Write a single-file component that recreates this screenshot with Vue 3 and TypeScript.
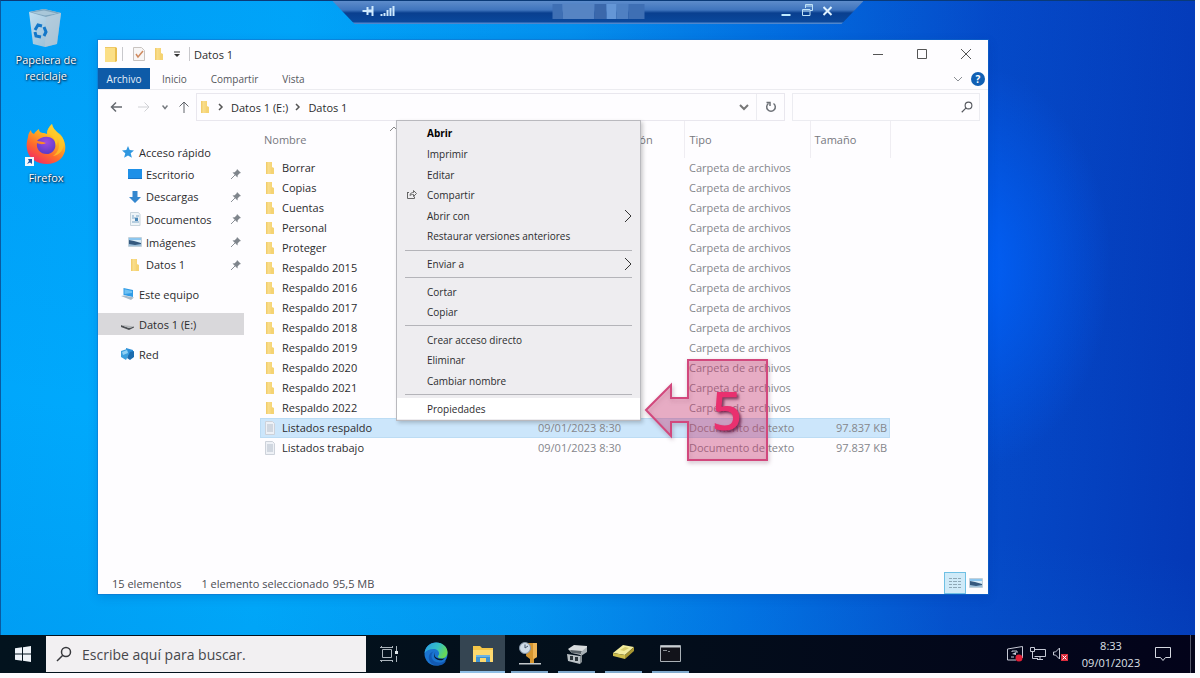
<script setup lang="ts">
import { ref } from 'vue'

interface Place { label: string; icon: string }
interface FileRow { name: string; kind: 'folder' | 'text'; date: string; type: string; size: string }
interface MenuEntry { label: string; strong?: boolean; arrow?: boolean; share?: boolean; startsGroup?: boolean }
interface TaskApp { label: string; icon: string; state: 'idle' | 'open' | 'active' }

const pinned: Place[] = [
  { label: 'Escritorio', icon: 'desktop' },
  { label: 'Descargas', icon: 'download' },
  { label: 'Documentos', icon: 'document' },
  { label: 'Imágenes', icon: 'picture' },
  { label: 'Datos 1', icon: 'folder' },
]

const roots: Place[] = [
  { label: 'Este equipo', icon: 'computer' },
  { label: 'Datos 1 (E:)', icon: 'drive' },
  { label: 'Red', icon: 'network' },
]

const folderNames = [
  'Borrar', 'Copias', 'Cuentas', 'Personal', 'Proteger',
  'Respaldo 2015', 'Respaldo 2016', 'Respaldo 2017', 'Respaldo 2018',
  'Respaldo 2019', 'Respaldo 2020', 'Respaldo 2021', 'Respaldo 2022',
]

const files: FileRow[] = [
  ...folderNames.map((name): FileRow => ({ name, kind: 'folder', date: '', type: 'Carpeta de archivos', size: '' })),
  { name: 'Listados respaldo', kind: 'text', date: '09/01/2023 8:30', type: 'Documento de texto', size: '97.837 KB' },
  { name: 'Listados trabajo', kind: 'text', date: '09/01/2023 8:30', type: 'Documento de texto', size: '97.837 KB' },
]

const menu: MenuEntry[] = [
  { label: 'Abrir', strong: true },
  { label: 'Imprimir' },
  { label: 'Editar' },
  { label: 'Compartir', share: true },
  { label: 'Abrir con', arrow: true },
  { label: 'Restaurar versiones anteriores' },
  { label: 'Enviar a', arrow: true, startsGroup: true },
  { label: 'Cortar', startsGroup: true },
  { label: 'Copiar' },
  { label: 'Crear acceso directo', startsGroup: true },
  { label: 'Eliminar' },
  { label: 'Cambiar nombre' },
  { label: 'Propiedades', startsGroup: true },
]

const apps: TaskApp[] = [
  { label: 'Vista de tareas', icon: 'taskview', state: 'idle' },
  { label: 'Microsoft Edge', icon: 'edge', state: 'idle' },
  { label: 'Explorador de archivos', icon: 'explorer', state: 'active' },
  { label: 'Copias programadas', icon: 'backup', state: 'open' },
  { label: 'Servidor', icon: 'server', state: 'open' },
  { label: 'Disco', icon: 'disk', state: 'open' },
  { label: 'Símbolo del sistema', icon: 'console', state: 'open' },
]

const selectedFile = ref('Listados respaldo')
const selectedPlace = ref('Datos 1 (E:)')
const activeEntry = ref('Propiedades')
const query = ref('')
const taskQuery = ref('')
</script>

<template>
  <div class="screen">
    <svg class="sprite" aria-hidden="true">
      <defs>
        <linearGradient id="g-fold" x1="0" x2="1" y1="0" y2="0">
          <stop offset="0" stop-color="#fbe39a" /><stop offset="1" stop-color="#f4cf68" />
        </linearGradient>
        <linearGradient id="g-bin" x1="0" x2="1" y1="0" y2="1">
          <stop offset="0" stop-color="#d3e6f2" /><stop offset="1" stop-color="#9fb9cc" />
        </linearGradient>
        <linearGradient id="g-fox" x1="0.8" x2="0.2" y1="0" y2="1">
          <stop offset="0" stop-color="#fff04a" /><stop offset="0.35" stop-color="#ffb021" />
          <stop offset="0.65" stop-color="#ff6a2c" /><stop offset="1" stop-color="#f0246b" />
        </linearGradient>
        <radialGradient id="g-orb" cx="0.5" cy="0.3" r="0.7">
          <stop offset="0" stop-color="#a04be0" /><stop offset="1" stop-color="#5a3bc8" />
        </radialGradient>
        <linearGradient id="g-edge" x1="0" x2="1" y1="0" y2="0.4">
          <stop offset="0" stop-color="#2a9be8" /><stop offset="0.6" stop-color="#35c1c4" /><stop offset="1" stop-color="#66d85a" />
        </linearGradient>
      </defs>
      <symbol id="folder" viewBox="0 0 12 14">
        <path d="M2 1h6v5l2 1v6H2z" fill="url(#g-fold)" />
        <path d="M2 1h1.500v12H2z" fill="#f2cd6c" />
        <path d="M7 7h3v6H7z" fill="#f5d373" />
      </symbol>
      <symbol id="bigfolder" viewBox="0 0 14 16">
        <path d="M1 1h10l2 1v13l-2 1H1z" fill="#fbdf86" />
        <path d="M11 1l2 1v13l-2 1z" fill="#e9bd4e" />
        <path d="M1 1h10v1H1z" fill="#eec867" />
      </symbol>
      <symbol id="text" viewBox="0 0 12 14">
        <path d="M1.500.5h7l2 2v11h-9z" fill="#eef1f6" stroke="#cdd2da" />
        <path d="M3 4h6M3 6h6M3 8h6M3 10h6" stroke="#b3bdca" />
      </symbol>
      <symbol id="star" viewBox="0 0 14 14">
        <path d="M7 1l1.700 4 4.300.4-3.300 2.800 1.200 4.500L7 10.400l-3.900 2.300 1.200-4.500L1 5.400l4.300-.4z" fill="#2f97e0" />
      </symbol>
      <symbol id="desktop" viewBox="0 0 14 14"><path d="M0 2h14v10H0z" fill="#1e90e8" /><path d="M0 11h14v1H0z" fill="#1976c8" /></symbol>
      <symbol id="download" viewBox="0 0 14 14"><path d="M4.500 1h5v6h3.500L7 13 1 7h3.500z" fill="#3487cf" /></symbol>
      <symbol id="document" viewBox="0 0 14 14">
        <path d="M2.500.5h8l1.500 2v11H2.500z" fill="#eef4f8" stroke="#c8d4dc" />
        <path d="M4 4h2M8 4h3M4 6h6M4 10h7" stroke="#7ba5c6" /><path d="M7 6h3v3H7z" fill="#4a87b8" />
      </symbol>
      <symbol id="picture" viewBox="0 0 14 14">
        <path d="M.5 2.500h13v9H.5z" fill="#d8ecf8" stroke="#c2d0da" />
        <path d="M1 3h12v2H1z" fill="#8cc6ef" /><path d="M1 5l5 1 7 2v2H1z" fill="#35597f" /><path d="M1 9l6 1 6-1v2H1z" fill="#9dbfd9" />
      </symbol>
      <symbol id="computer" viewBox="0 0 14 14">
        <path d="M2.500 1l9.500 2v7l-9.500-2z" fill="#2f9be6" /><path d="M3.500 2.300l7.500 1.600v2L3.500 7z" fill="#6ec1f3" />
        <path d="M0 9l3-.5 10 2-3 2.500z" fill="#a9bac8" />
      </symbol>
      <symbol id="drive" viewBox="0 0 14 14"><path d="M0 8l8 3 5-1.500v1L8 13 0 10z" fill="#4c4f53" /><path d="M0 8l6 .5 7 1-5 1.600z" fill="#b3b5b8" /></symbol>
      <symbol id="network" viewBox="0 0 14 14">
        <path d="M5 1l7 2v8l-7-2z" fill="#2b8fd9" /><path d="M0 4l6-2 2 5-3 6-5-3z" fill="#3b9fdd" />
        <path d="M9 5l4-1v6l-4 3-3-2z" fill="#1c6cae" /><path d="M1 5l5-2 1 3-5 2z" fill="#8fd0f4" />
      </symbol>
      <symbol id="pin" viewBox="0 0 12 12">
        <path d="M7 1l4 4-1.300.3-2 2L7.500 9.500 2.500 4.500l2.200-.2 2-2z" fill="#7f858c" /><path d="M5 7l-4 4" stroke="#8b9198" />
      </symbol>
      <symbol id="taskview" viewBox="0 0 26 26">
        <g fill="none" stroke="#aab4bb"><path d="M6.500 8.500h9v8h-9z" /><path d="M4 6.500h13M4 19.500h13M5.500 5v2M16.500 5v2M5.500 19v2M16.500 19v2M20.500 5v6M20.500 15v6" /></g>
        <path d="M19 10h3v3h-3z" fill="#dfe6ea" />
      </symbol>
      <symbol id="edge" viewBox="0 0 26 26">
        <circle cx="13" cy="13" r="11.500" fill="#1a74d0" />
        <path d="M1.600 12C2.500 5.500 7.500 1.500 13.300 1.500c6.500 0 11.200 4.500 11.200 9.700 0 4-2.800 6.300-6 6.300-2.400 0-3.700-.8-3.700-1.900 0-.9 1.300-1.300 1.300-3.200 0-2.400-2.400-4.400-5.600-4.400C6.700 8 3.300 9.500 1.600 12z" fill="url(#g-edge)" />
        <path d="M10.500 10.500c-3 2.500-2.700 7.600 1.300 10 3.200 1.800 7.300 1.200 9.800-.3.700-.4 1.200.2.800.8-2 2.600-5.200 3.900-9 3.500-5-.5-8-4.500-7.600-8.500.3-3 2.300-5 4.700-5.500z" fill="#125ab4" />
        <path d="M12.500 11c-1.700 1.500-1.500 4 .5 5.500 2.500 1.700 6 1.500 8.700.7-1 1.500-3 2.300-5 2-3-.3-5.500-2-5.700-4.500-.1-1.500.5-3 1.500-3.700z" fill="#06182c" />
      </symbol>
      <symbol id="explorer" viewBox="0 0 26 26">
        <path d="M3 5h7l2 2h11v14H3z" fill="#f5c648" /><path d="M3 9h20v12H3z" fill="#fdd96f" />
        <path d="M6 21v-7h14v7h-4v-4h-6v4z" fill="#3f93d2" /><path d="M6 14h14v2H6z" fill="#6db4e4" />
      </symbol>
      <symbol id="backup" viewBox="0 0 26 26">
        <path d="M10 2h10v14l-3 2v4h-4v-4l-4-3z" fill="#d5952f" /><path d="M16 2h4v14l-4 2z" fill="#eeb455" />
        <circle cx="8" cy="7" r="5.500" fill="#cfdce8" stroke="#8394a6" /><path d="M8 3.500V7l3-2" stroke="#44566a" fill="none" />
        <path d="M2 22h22v1.500H2z" fill="#c2c8cc" />
      </symbol>
      <symbol id="server" viewBox="0 0 26 26">
        <path d="M4 8l6-4 13 1v5l-6 4-9-2z" fill="#d8dcde" /><path d="M6 9l12 1-1 3-9-1z" fill="#596268" /><path d="M17 11l6-5v5l-6 4z" fill="#a8b0b5" />
        <path d="M3 13l13 2v8L4 20z" fill="#b9c0c4" /><path d="M6 15h3v4H6zM11 16h3v4h-3z" fill="#2d363c" /><path d="M16 15l2-2v8l-2 2z" fill="#858d92" />
      </symbol>
      <symbol id="disk" viewBox="0 0 26 26">
        <path d="M2 12L12 4l11 2-9 8z" fill="#f3eda0" /><path d="M2 12l12 2v4L2 15z" fill="#cdbd4c" /><path d="M14 14l9-8v4l-9 8z" fill="#a89632" />
        <path d="M9 9l5-3 4 1-5 3z" fill="#d7cd6d" />
      </symbol>
      <symbol id="console" viewBox="0 0 26 26">
        <path d="M2.500 4.500h20v16h-20z" fill="#12131a" stroke="#a9b0b6" /><path d="M3 5h19v1.500H3z" fill="#c9ced2" /><path d="M5 9.500h4M10 10.500h2" stroke="#888d92" />
      </symbol>
      <symbol id="lens" viewBox="0 0 16 16">
        <circle cx="10" cy="6" r="4.500" fill="none" stroke="currentColor" stroke-width="1.500" /><path d="M6.800 9.200L1 15" stroke="currentColor" stroke-width="1.500" />
      </symbol>
    </svg>

    <main class="desktop">
      <nav class="shortcuts" aria-label="Escritorio">
        <button class="shortcut">
          <svg width="42" height="42" viewBox="0 0 42 42">
            <path d="M4 5L19 2l17 4-4 31-12 3L8 37z" fill="url(#g-bin)" opacity=".92" />
            <path d="M4 5l15-3 17 4-15 4z" fill="#7fa6bf" /><path d="M7 5.500l12-2 13 3-12 2z" fill="#a9c7d9" />
            <path d="M21 10l15-4-4 31-12 3z" fill="#b6cad8" opacity=".6" />
            <g fill="none" stroke="#1377c9" stroke-width="3"><path d="M10 23l3-5 4 1" /><path d="M19 20l2 5-2 4" /><path d="M16 30l-5-1-1-4" /></g>
          </svg>
          <span>Papelera de reciclaje</span>
        </button>
        <button class="shortcut">
          <svg width="42" height="44" viewBox="0 0 42 44">
            <path d="M3 14c0-3 2-6 3-7 0 2 1 3 3 4 1-2 3-4 5-5 0 3 2 4 5 4l3 1c0-4 2-7 5-10 1 5 4 7 7 10 6 5 7 12 6 17-2 8-9 13-18 13C12 41 3 35 2 26c-1-4 0-8 1-12z" fill="url(#g-fox)" />
            <path d="M22 10c6 2 9 7 8 13 3-2 3-6 2-9 4 8 2 15-4 19 7-1 11-7 11-13 0-4-2-7-4-9-4-3-7-5-8-10-3 3-5 5-5 9z" fill="#ffc928" opacity=".7" />
            <path d="M12 18c3-4 11-6 16-2 5 5 2 15-6 15-7 0-11-5-10-11 2 1 6 2 9 0-3-1-6-2-9-2z" fill="url(#g-orb)" />
            <path d="M0 34h9v9H0z" fill="#f4f8fc" /><path d="M2 41l2-3-1-2h4v5l-2-1.500z" fill="#1c5aa8" />
          </svg>
          <span>Firefox</span>
        </button>
      </nav>

      <header class="session">
        <svg width="34" height="14" viewBox="0 0 34 14" aria-hidden="true">
          <path d="M1 7h5M6 3v8M11 2v10" stroke="#cfeaff" stroke-width="2" /><path d="M6 5.500h5v3H6z" fill="#cfeaff" />
          <path d="M20 12v-2M23 12V9M26 12V6M29 12V4M32 12V2" stroke="#cfeaff" stroke-width="2" />
        </svg>
        <div class="mosaic" aria-hidden="true"><i /><i /><i /><i /><i /><i /></div>
        <div class="session-buttons">
          <button aria-label="Minimizar sesión"><svg width="12" height="14" viewBox="0 0 12 14"><path d="M1 12h9" stroke="#bfeaff" stroke-width="2" /></svg></button>
          <button aria-label="Restaurar sesión"><svg width="12" height="14" viewBox="0 0 12 14"><path d="M4 5V1.500h7v6H8.500M4 3h7M1 6.500h7.500v6H1zM1 8h7" stroke="#bfe2f8" fill="none" /></svg></button>
          <button aria-label="Cerrar sesión"><svg width="12" height="14" viewBox="0 0 12 14"><path d="M1 4l8 8M9 4l-8 8" stroke="#dff2ff" stroke-width="2" /></svg></button>
        </div>
      </header>

      <section class="window" aria-label="Datos 1">
        <header class="titlebar">
          <svg width="14" height="16"><use href="#bigfolder" /></svg>
          <i class="rule first" />
          <svg width="12" height="14" viewBox="0 0 12 14"><path d="M.5.5h8l3 3v10H.5z" fill="#f8f6f6" stroke="#c9c3c0" /><path d="M3 7l2 3 5-6" stroke="#cf8a60" stroke-width="1.500" fill="none" /></svg>
          <svg width="12" height="14"><use href="#folder" /></svg>
          <svg width="8" height="8" viewBox="0 0 8 8"><path d="M1 2h6" stroke="#333" /><path d="M1 4h6L4 7z" fill="#333" /></svg>
          <i class="rule" />
          <h1>Datos 1</h1>
          <div class="caption">
            <button aria-label="Minimizar"><svg width="12" height="12"><path d="M1 6.500h10" stroke="#555" /></svg></button>
            <button aria-label="Maximizar"><svg width="12" height="12"><path d="M1.500 1.500h9v9h-9z" stroke="#555" fill="none" /></svg></button>
            <button aria-label="Cerrar"><svg width="12" height="12"><path d="M1 1l10 10M11 1L1 11" stroke="#555" /></svg></button>
          </div>
        </header>

        <nav class="ribbon" aria-label="Cinta">
          <button class="file-tab">Archivo</button>
          <button>Inicio</button>
          <button>Compartir</button>
          <button>Vista</button>
          <div class="ribbon-end">
            <button aria-label="Expandir la cinta"><svg width="10" height="6"><path d="M1 1l4 4 4-4" stroke="#8b8f94" fill="none" /></svg></button>
            <button class="help" aria-label="Ayuda">?</button>
          </div>
        </nav>

        <div class="navbar">
          <div class="history">
            <button aria-label="Atrás"><svg width="12" height="12"><path d="M12 6H1M6 1.500L1.500 6 6 10.500" stroke="#666a70" stroke-width="1.500" fill="none" /></svg></button>
            <button aria-label="Adelante"><svg width="12" height="12"><path d="M0 6h11M6.500 1.500L11 6l-4.500 4.500" stroke="#d0d1d5" fill="none" /></svg></button>
            <button aria-label="Ubicaciones recientes"><svg width="6" height="12"><path d="M.5 4.500l2.500 3 2.500-3" stroke="#777b80" stroke-width="1.500" fill="none" /></svg></button>
            <button aria-label="Arriba"><svg width="12" height="12"><path d="M6 12V1M1.500 5.500L6 1l4.500 4.500" stroke="#60646a" fill="none" /></svg></button>
          </div>
          <div class="address">
            <svg width="12" height="14"><use href="#folder" /></svg>
            <svg class="sep" width="6" height="8"><path d="M1 1l3 3-3 3" stroke="#555" stroke-width="1.500" fill="none" /></svg>
            <button>Datos 1 (E:)</button>
            <svg class="sep" width="6" height="8"><path d="M1 1l3 3-3 3" stroke="#555" stroke-width="1.500" fill="none" /></svg>
            <button>Datos 1</button>
            <button class="drop" aria-label="Mostrar ubicaciones"><svg width="10" height="8"><path d="M1 2l4 4 4-4" stroke="#777" stroke-width="2" fill="none" /></svg></button>
            <button class="reload" aria-label="Actualizar"><svg width="12" height="12"><path d="M8.500 2.500a4.300 4.300 0 1 1-5 0M1.500 1.500h3.500v3.500" stroke="#6c7076" stroke-width="1.500" fill="none" /></svg></button>
          </div>
          <label class="find">
            <input v-model="query" type="search" aria-label="Buscar en Datos 1" />
            <svg width="12" height="12"><use href="#lens" /></svg>
          </label>
        </div>

        <div class="body">
          <nav class="places" aria-label="Panel de navegación">
            <button class="place"><svg width="14" height="14"><use href="#star" /></svg>Acceso rápido</button>
            <div class="pinned">
              <button v-for="p in pinned" :key="p.label" class="place child">
                <svg width="14" height="14"><use :href="'#' + p.icon" /></svg>{{ p.label }}
                <svg class="pin" width="12" height="12"><use href="#pin" /></svg>
              </button>
            </div>
            <div class="roots">
              <button
                v-for="p in roots" :key="p.label" class="place"
                :class="{ current: p.label === selectedPlace }" @click="selectedPlace = p.label"
              >
                <svg width="14" height="14"><use :href="'#' + p.icon" /></svg>{{ p.label }}
              </button>
            </div>
          </nav>

          <div class="listing">
            <table>
              <colgroup><col class="c-name" /><col class="c-date" /><col class="c-type" /><col class="c-size" /></colgroup>
              <thead>
                <tr>
                  <th scope="col">Nombre<svg class="sort" width="8" height="5"><path d="M0 5l4-4 4 4" stroke="#888" fill="none" /></svg></th>
                  <th scope="col">Fecha de modificación</th>
                  <th scope="col">Tipo</th>
                  <th scope="col">Tamaño</th>
                </tr>
              </thead>
              <tbody>
                <tr v-for="f in files" :key="f.name" :class="{ chosen: f.name === selectedFile }" @click="selectedFile = f.name">
                  <td class="name"><div><svg width="12" height="14"><use :href="'#' + f.kind" /></svg>{{ f.name }}</div></td>
                  <td>{{ f.date }}</td>
                  <td>{{ f.type }}</td>
                  <td class="size">{{ f.size }}</td>
                </tr>
              </tbody>
            </table>
          </div>
        </div>

        <footer class="status">
          <span>15 elementos</span>
          <span>1 elemento seleccionado</span>
          <span class="weight">95,5 MB</span>
          <div class="views">
            <button class="on" aria-label="Detalles"><svg width="14" height="14"><path d="M1 2.500h3M1 5.500h3M1 8.500h3M1 11.500h3M5 2.500h4M5 5.500h4M5 8.500h4M5 11.500h4M10 2.500h3M10 5.500h3M10 8.500h3M10 11.500h3" stroke="#8fa8b6" /></svg></button>
            <button aria-label="Iconos grandes"><svg width="14" height="14"><use href="#picture" /></svg></button>
          </div>
        </footer>

        <div class="menu" role="menu">
          <template v-for="m in menu" :key="m.label">
            <hr v-if="m.startsGroup" />
            <button role="menuitem" :class="{ strong: m.strong, hot: m.label === activeEntry }" @mouseenter="activeEntry = m.label">
              <span class="lead"><svg v-if="m.share" width="12" height="12"><path d="M1.500 3v6.500h7V7.500M1 3.500h2M4 6.500C4 4 6 3.500 7.500 3.500V1.500l3 3-3 3v-2C6 5.500 5 5.500 4 6.500z" stroke="#666" fill="none" /></svg></span>
              {{ m.label }}
              <svg v-if="m.arrow" class="more" width="8" height="14"><path d="M1 1l6 6-6 6" stroke="#333" fill="none" /></svg>
            </button>
          </template>
        </div>

        <svg class="callout" width="130" height="110" viewBox="0 0 130 110" role="img" aria-label="5">
          <path d="M3 54L28 29v13h17V4h79v100H45V66H28v14z" fill="#e0427f" fill-opacity=".34" stroke="#d2487d" stroke-width="2" />
          <text x="84" y="74" text-anchor="middle">5</text>
        </svg>
      </section>
    </main>

    <footer class="taskbar">
      <button class="start" aria-label="Inicio">
        <svg width="16" height="16"><path d="M0 2.300l7-1v6.200H0zM8 1.200L16 0v7.500H8zM0 8.500h7v6.200l-7-1zM8 8.500h8V16l-8-1.200z" fill="#eef3f8" /></svg>
      </button>
      <label class="search">
        <svg width="16" height="16"><use href="#lens" /></svg>
        <input v-model="taskQuery" type="text" placeholder="Escribe aquí para buscar." aria-label="Escribe aquí para buscar" />
      </label>
      <div class="apps">
        <button v-for="a in apps" :key="a.label" :class="a.state" :aria-label="a.label">
          <svg width="26" height="26"><use :href="'#' + a.icon" /></svg>
        </button>
      </div>
      <div class="tray">
        <svg width="16" height="16"><path d="M.5 3L15.500.5V12M.5 3v11H9M5 6V5h5v2M4 11h3" stroke="#c5c8d4" fill="none" /><path d="M5 8l4-2v3z" fill="#c5c8d4" /><circle cx="12" cy="12" r="3.500" fill="#e01f36" /></svg>
        <svg width="16" height="16"><path d="M5 3.500h10.500v7H4.500M.5 1.500h4v4h-4zM2.500 5.500v7H8M7 13.500h6M10 11v2" stroke="#c5c8d4" fill="none" /></svg>
        <svg width="16" height="16"><path d="M.5 6h2l4-4v11l-4-4h-2z" stroke="#c5c8d4" fill="none" /><path d="M8 8h7v7H8z" fill="#dc2c3c" /><path d="M9.500 9.500l4 4M13.500 9.500l-4 4" stroke="#fff" /></svg>
        <time class="clock"><span>8:33</span><span>09/01/2023</span></time>
        <button class="notices" aria-label="Notificaciones"><svg width="16" height="16"><path d="M.5 1.500h15v10h-5L8 14.500l-2.500-3h-5z" stroke="#d5d8e0" fill="none" /></svg></button>
        <i class="peek" />
      </div>
    </footer>
  </div>
</template>

<style>
body { margin: 0; background: #fdfbfe; }
</style>

<style scoped>
.screen {
  box-sizing: border-box;
  display: flex;
  flex-direction: column;
  height: 100vh;
  min-height: 600px;
  padding: 0 5px 5px 0;
  background: #fdfbfe;
  font-family: "Open Sans", "Noto Sans", sans-serif;
  font-size: 11px;
  color: #2c2c2e;
  overflow: hidden;
}
.sprite { position: absolute; width: 0; height: 0; }
svg { flex: none; display: block; }
button { border: 0; padding: 0; margin: 0; background: none; color: inherit; font: inherit; white-space: nowrap; }
input { border: 0; padding: 0; background: none; font: inherit; color: inherit; outline: none; min-width: 0; }

.desktop {
  position: relative;
  flex: 1;
  border-top: 1px solid #0a3a78;
  border-left: 1px solid #0a5aa0;
  background:
    radial-gradient(ellipse 12% 32% at 81% 42%, rgba(0, 100, 255, 0.9), rgba(0, 90, 240, 0)),
    linear-gradient(8deg, rgba(0, 130, 220, 0.25), rgba(0, 60, 190, 0) 30%, rgba(0, 60, 190, 0.12)),
    linear-gradient(94deg, #00a6fb 0%, #00aefe 24%, #0498f2 46%, #0270e2 64%, #054cca 80%, #0438b6 100%);
}

.shortcuts { display: flex; flex-direction: column; width: 90px; padding-top: 6px; gap: 39px; }
.shortcut { display: flex; flex-direction: column; align-items: center; gap: 3px; line-height: 16px; white-space: normal; color: #fff; text-shadow: 1px 1px 2px #001a3a, 0 0 2px #00254d; }
.shortcut span { width: 64px; }

.session {
  position: absolute;
  top: 0;
  left: 50%;
  width: 531px;
  height: 23px;
  box-sizing: border-box;
  transform: translateX(-50%);
  display: flex;
  align-items: flex-start;
  justify-content: space-between;
  padding: 3px 29px 0;
  background: linear-gradient(180deg, #5d8ccb 0, #3f74bd 9px, #093f8f 12px, #0a489c 21px, #4f86cc 22px);
  clip-path: polygon(0 0, 100% 0, calc(100% - 22px) 100%, 22px 100%);
}
.mosaic { display: grid; grid-template-columns: 10px 32px 12px 10px 12px 16px; height: 12px; margin-left: 20px; }
.mosaic i { background: #3e6fb4; }
.mosaic i:nth-child(2) { background: #5684c3; height: 15px; }
.mosaic i:nth-child(3) { background: #3b68ab; }
.mosaic i:nth-child(4) { background: #6496d6; }
.mosaic i:nth-child(5) { background: #4f80c2; height: 15px; }
.session-buttons { display: flex; gap: 9px; margin-top: -1px; }

.window {
  position: absolute;
  inset: 39px 207px 41px 97px;
  display: flex;
  flex-direction: column;
  background: #fefdff;
  box-shadow: 0 0 0 1px rgba(20, 110, 200, 0.5), 0 3px 10px rgba(0, 40, 120, 0.18);
}
.titlebar { display: flex; align-items: center; height: 28px; padding-left: 6px; gap: 8px; }
.titlebar h1 { margin: 0 0 0 -4px; font-size: 11px; font-weight: 400; }
.rule { width: 1px; height: 14px; background: #c8c8cc; }
.rule.first { margin: 0 2px 0 -4px; }
.caption { display: flex; gap: 32px; margin-left: auto; padding-right: 16px; }

.ribbon { display: flex; align-items: stretch; height: 21px; font-size: 10px; color: #55575c; border-bottom: 1px solid #ececf0; gap: 24px; }
.file-tab { width: 52px; margin-right: -12px; background: #0e5ba8; color: #e6f0fa; }
.ribbon-end { display: flex; align-items: center; gap: 8px; margin-left: auto; padding-right: 3px; }
.help { width: 14px; height: 14px; border-radius: 50%; background: #1160b4; color: #fff; font-weight: 700; line-height: 14px; }

.navbar { display: flex; height: 28px; margin: 3px 8px 0 12px; }
.history { display: flex; align-items: center; gap: 16px; width: 86px; }
.history button:nth-child(3) { margin: 0 -6px 0 -4px; }
.address { display: flex; flex: 1; align-items: center; border: 1px solid #e9e7ee; gap: 7px; padding-left: 2px; }
.drop { margin-left: auto; }
.reload { display: grid; place-items: center; width: 28px; height: 26px; border-left: 1px solid #ececf1; }
.find { display: flex; align-items: center; width: 174px; margin-left: 7px; border: 1px solid #ececf1; padding: 0 6px; color: #55585e; }
.find input { flex: 1; width: 100%; }

.body { flex: 1; display: flex; min-height: 0; }
.places { width: 146px; padding-top: 20px; }
.place { display: flex; align-items: center; width: 100%; height: 22px; padding-left: 23px; gap: 4px; }
.place.child { padding-left: 30px; }
.place.current { background: #d9d8db; }
.pinned { display: grid; grid-template-rows: repeat(5, 1fr); align-items: center; height: 113px; }
.pin { margin: 0 2px 0 auto; }
.roots { display: flex; flex-direction: column; gap: 8px; padding-top: 7px; }

.listing { flex: 1; margin-left: 16px; overflow: hidden; }
table { width: 630px; table-layout: fixed; border-collapse: collapse; color: #85868b; }
.c-name { width: 274px; }
.c-date { width: 150px; }
.c-type { width: 126px; }
.c-size { width: 80px; }
th { position: relative; height: 37px; padding: 0 0 0 4px; box-sizing: border-box; text-align: left; font-weight: 400; color: #77787e; border-right: 1px solid #efedf2; white-space: nowrap; }
.sort { position: absolute; left: 130px; top: 5px; }
td { height: 20px; padding: 0 0 0 4px; line-height: 20px; white-space: nowrap; }
th:nth-child(3), td:nth-child(3) { padding-left: 5px; }
.name { color: #2c2c2e; }
.name div { display: flex; align-items: center; gap: 6px; }
.size { text-align: right; padding-right: 3px; }
.chosen { background: #cce6fb; box-shadow: inset 0 0 0 1px #bcdcf4; }

.status { display: flex; align-items: center; height: 22px; padding: 0 3px 0 14px; color: #4b4c52; gap: 20px; }
.weight { margin-left: -16px; }
.views { display: flex; align-items: center; gap: 1px; margin-left: auto; }
.views button { display: grid; place-items: center; width: 18px; height: 22px; }
.views .on { width: 22px; box-sizing: border-box; background: #cfeaf8; border: 1px solid #6fc0e4; }

.menu {
  position: absolute;
  left: 298px;
  top: 80px;
  width: 245px;
  height: 301px;
  box-sizing: border-box;
  display: flex;
  flex-direction: column;
  padding: 2px 0 1px;
  background: #eeedf0;
  border: 1px solid #b9b9be;
  box-shadow: 2px 2px 4px rgba(0, 0, 0, 0.2);
  font-size: 10px;
}
.menu button { flex: 1; display: flex; align-items: center; padding-right: 8px; text-align: left; }
.menu .strong { font-weight: 700; color: #000; }
.menu .hot { background: #fff; }
.lead { width: 21px; padding-left: 9px; }
.more { margin-left: auto; }
.menu hr { width: 227px; height: 1px; margin: 3px 8px; border: 0; background: #b4b4b9; }

.callout { position: absolute; left: 545px; top: 316px; filter: drop-shadow(1px 2px 2px rgba(90, 30, 60, 0.35)); pointer-events: none; }
.callout text { font-size: 53px; font-weight: 600; fill: #e9306f; filter: drop-shadow(2px 2px 1px rgba(80, 10, 50, 0.6)); }

.taskbar { display: flex; height: 38px; background: linear-gradient(90deg, #03131e, #030f1b 50%, #03031a); color: #dfe1e8; }
.start { display: grid; place-items: center; width: 46px; }
.search { display: flex; align-items: center; box-sizing: border-box; width: 320px; margin: 1px 0; padding-left: 10px; gap: 10px; background: #f2f0f2; color: #38393d; font-size: 14px; }
.search input { flex: 1; }
.search input::placeholder { color: #46474b; opacity: 1; }
.apps { display: flex; gap: 2px; }
.apps button { position: relative; display: grid; place-items: center; width: 45px; }
.apps .active { background: #354552; }
.apps .open::after, .apps .active::after { content: ""; position: absolute; bottom: 0; left: 4px; right: 4px; height: 2px; background: #7fa9cc; }
.apps .active::after { left: 0; right: 0; background: #8fbfe6; }
.tray { display: flex; align-items: center; margin-left: auto; gap: 7px; }
.clock { display: flex; flex-direction: column; align-items: center; width: 70px; line-height: 17px; font-size: 11px; }
.notices { margin: 0 12px 0 2px; }
.peek { width: 1px; height: 38px; margin-right: 4px; background: #55576a; }
</style>
